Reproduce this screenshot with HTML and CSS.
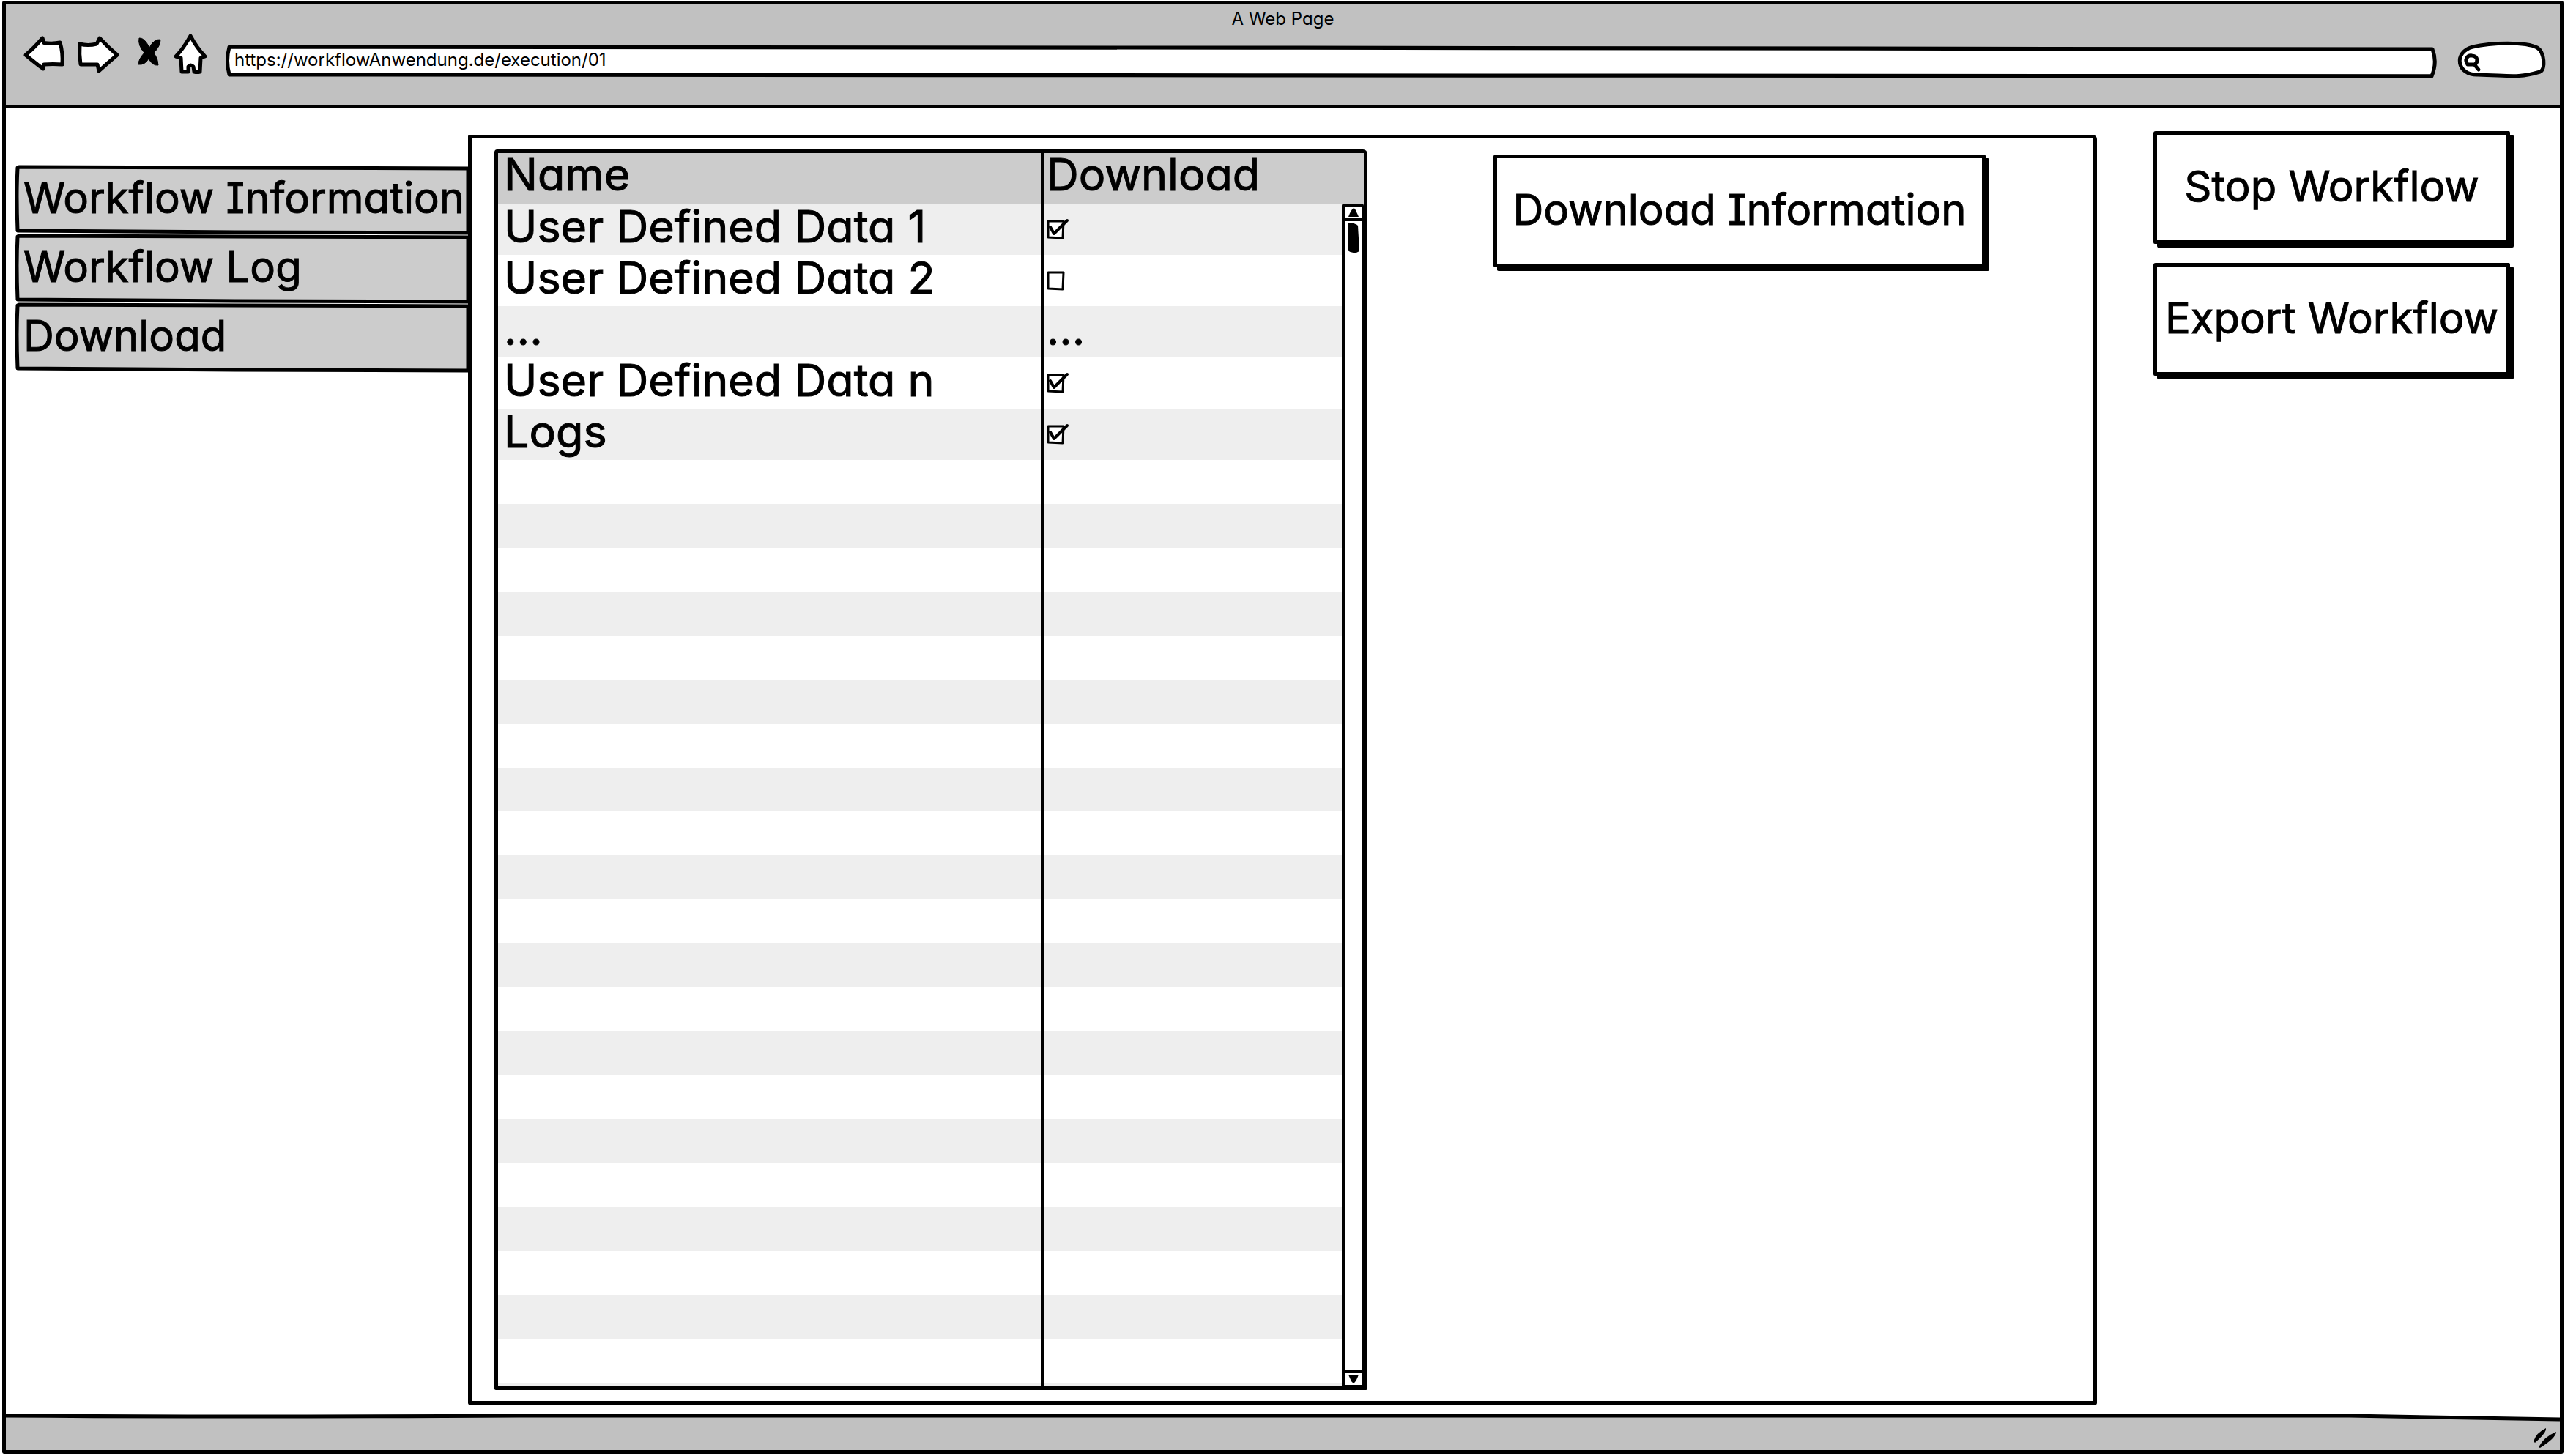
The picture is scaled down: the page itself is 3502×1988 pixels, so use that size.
FILE: index.html
```html
<!DOCTYPE html>
<html lang="en">
<head>
<meta charset="utf-8">
<title>A Web Page</title>
<link rel="stylesheet" href="styles.css">
</head>
<body>
<div class="browser">
  <header class="chrome">
    <h1 class="title">A Web Page</h1>
    <form class="toolbar">
      <button type="button" class="icon back" aria-label="Back">
        <svg viewBox="0 0 55 62"><path d="M3 31Q14 22 26 8L28 14.500Q40 16 50 14Q54 28 53 44Q40 43 28 44L27 50Q16 42 3 31Z"/></svg>
      </button>
      <button type="button" class="icon forward" aria-label="Forward">
        <svg viewBox="0 0 57 62"><path d="M4 16Q15 19 27 16L31 8Q42 20 55 31Q42 42 30 53L28 44H5Q3 30 4 16Z"/></svg>
      </button>
      <button type="button" class="icon stop" aria-label="Stop">
        <svg viewBox="0 0 32 62"><path class="solid" d="M2 8Q9 7 16 21Q22 9 31 10Q31 19 22 28Q28 36 28 45Q20 46 15 36Q10 45 1 44Q1 37 9 28Q0 18 2 8Z"/></svg>
      </button>
      <button type="button" class="icon home" aria-label="Home">
        <svg viewBox="0 0 45 62"><path d="M23 5Q32 22 43 33L37 35L36 54Q32 55 28 54L27 47Q23 43 20 47L20 54H11L10 35L3 33Q13 23 23 5Z"/></svg>
      </button>
      <div class="address">
        <svg class="outline" viewBox="0 0 3019 42" preserveAspectRatio="none"><path d="M5 2L1400 3L3013 5Q3020 22 3012 40L1400 39L5 38Q0 20 5 2Z"/></svg>
        <input type="text" aria-label="Address" value="https://workflowAnwendung.de/execution/01">
      </div>
      <div class="search">
        <svg class="outline" viewBox="0 0 119 49"><path d="M26 45C-3 46-8 14 19 7C44 1 92 0 107 8C117 14 119 38 111 41C80 50 70 46 26 45Z"/><path d="M12 31C7 24 12 18 18 19C27 20 26 28 22 31ZM22 32L27 38"/></svg>
        <input type="search" aria-label="Search">
      </div>
    </form>
  </header>

  <main class="page">
    <nav class="tabs">
      <a href="#information"><svg class="outline" viewBox="0 0 618 94" preserveAspectRatio="none"><path d="M5 2L300 3L618 4V92L300 91L3 89Q1 40 3 3Z"/></svg><span>Workflow Information</span></a>
      <a href="#log"><svg class="outline" viewBox="0 0 618 94" preserveAspectRatio="none"><path d="M5 2L300 3L618 4V92L300 91L3 89Q1 40 3 3Z"/></svg><span>Workflow Log</span></a>
      <a href="#download"><svg class="outline" viewBox="0 0 618 94" preserveAspectRatio="none"><path d="M5 2L300 3L618 4V92L300 91L3 89Q1 40 3 3Z"/></svg><span>Download</span></a>
    </nav>

    <section class="panel" id="download">
      <div class="grid">
        <table>
          <thead>
            <tr><th class="name">Name</th><th>Download</th></tr>
          </thead>
          <tbody>
            <tr><td class="name">User Defined Data 1</td><td><span class="check"><input type="checkbox" checked aria-label="Download User Defined Data 1"><svg viewBox="0 0 32 28"><path d="M2 3L23 3L22 26L2 25Z"/><path class="tick" d="M5 11L10 20L28 2"/></svg></span></td></tr>
            <tr><td class="name">User Defined Data 2</td><td><span class="check"><input type="checkbox" aria-label="Download User Defined Data 2"><svg viewBox="0 0 32 28"><path d="M2 3L23 3L22 26L2 25Z"/><path class="tick" d="M5 11L10 20L28 2"/></svg></span></td></tr>
            <tr><td class="name">...</td><td>...</td></tr>
            <tr><td class="name">User Defined Data n</td><td><span class="check"><input type="checkbox" checked aria-label="Download User Defined Data n"><svg viewBox="0 0 32 28"><path d="M2 3L23 3L22 26L2 25Z"/><path class="tick" d="M5 11L10 20L28 2"/></svg></span></td></tr>
            <tr><td class="name">Logs</td><td><span class="check"><input type="checkbox" checked aria-label="Download Logs"><svg viewBox="0 0 32 28"><path d="M2 3L23 3L22 26L2 25Z"/><path class="tick" d="M5 11L10 20L28 2"/></svg></span></td></tr>
          </tbody>
        </table>
        <div class="stripes"><div class="name"></div></div>
        <div class="scrollbar">
          <button type="button" aria-label="Scroll up"><svg viewBox="0 0 16 12"><path d="M1 12Q4 4 7 1Q9-1 11 3L15 12Z"/></svg></button>
          <div class="track"><svg viewBox="0 0 16 42"><path d="M1 1Q8-1 14 4L16 39Q8 44 0 38Z"/></svg></div>
          <button type="button" aria-label="Scroll down"><svg viewBox="0 0 16 12"><path d="M1 0H15Q12 8 10 10Q8 13 5 9Z"/></svg></button>
        </div>
      </div>
      <button type="button" class="btn">Download Information</button>
    </section>

    <aside class="actions">
      <button type="button" class="btn">Stop Workflow</button>
      <button type="button" class="btn">Export Workflow</button>
    </aside>
  </main>

  <footer class="status">
    <svg class="edge" viewBox="0 0 3487 12" preserveAspectRatio="none"><path class="fill" d="M0 3Q300 5 700 3H3200L3487 8V12H0Z"/><path class="line" d="M0 3Q300 5 700 3H3200L3487 8"/></svg>
    <svg class="grip" viewBox="0 0 32 28"><path d="M0 18Q4 6 17 0Q18 6 2 20ZM7 26Q14 12 31 5Q31 13 9 27Z"/></svg>
  </footer>
</div>
</body>
</html>
```
FILE: styles.css
```css
* { box-sizing: border-box; }

body {
  margin: 0;
  min-height: 100vh;
  display: flex;
  padding: 1px 2px 3px 3px;
  background: #fff;
  color: #000;
  font: 61px Inter, "Liberation Sans", sans-serif;
  /* single-storey a, capital I with serifs */
  font-feature-settings: "cv11", "cv08";
}

button, input { font: inherit; font-feature-settings: inherit; color: inherit; }
svg { display: block; overflow: visible; }

.browser {
  flex: 1;
  display: flex;
  flex-direction: column;
  border: 5px solid #000;
  border-radius: 3px;
}

/* window chrome */
.chrome {
  background: #c1c1c1;
  border-bottom: 5px solid #000;
  padding-bottom: 37px;
  font-size: 24px;
}
.title {
  margin: 0;
  font-size: 24px;
  font-weight: 400;
  line-height: 40px;
  height: 38px;
  text-align: center;
}
.toolbar {
  display: flex;
  align-items: flex-end;
  height: 62px;
  padding: 0 19px 0 24px;
}
.icon {
  height: 62px;
  padding: 0;
  border: 0;
  background: none;
}
.icon svg {
  width: 100%;
  height: 100%;
  fill: #fff;
  stroke: #000;
  stroke-width: 5;
  stroke-linejoin: round;
}
.icon .solid { fill: #000; stroke-width: 1; }
.back { width: 55px; }
.forward { width: 57px; margin-left: 18px; }
.stop { width: 32px; margin-left: 26px; }
.home { width: 45px; margin-left: 17px; }

.outline {
  position: absolute;
  inset: 0;
  width: 100%;
  height: 100%;
  fill: #fff;
  stroke: #000;
  stroke-width: 5;
  stroke-linejoin: round;
  stroke-linecap: round;
}
.address, .search { position: relative; }
.address { flex: 1; height: 44px; margin-left: 26px; }
.search { width: 119px; height: 49px; margin-left: 30px; }
.address input, .search input {
  position: relative;
  display: block;
  width: 100%;
  height: 100%;
  border: 0;
  padding: 0 12px;
  background: none;
  outline: 0;
}
.address input { padding-bottom: 5px; }
.search input { padding-left: 32px; }

/* page body */
.page {
  flex: 1;
  display: grid;
  grid-template-columns: 618px 1fr auto;
  padding: 0 68px 12px 13px;
}
.tabs { padding-top: 78px; font-size: 58px; }
.tabs a {
  position: relative;
  display: block;
  height: 94px;
  padding-left: 11px;
  color: inherit;
  text-decoration: none;
  line-height: 88px;
  white-space: nowrap;
}
.tabs .outline { fill: #ccc; }
.tabs span { position: relative; }
.tabs, .grid table, .btn { -webkit-text-stroke: 1px #000; }

.panel {
  position: relative;
  display: flex;
  align-items: flex-start;
  margin-top: 36px;
  padding: 15px 147px 15px 31px;
  border: 5px solid #000;
  border-radius: 2px 6px 2px 2px;
  background: #fff;
}
.panel .btn { width: 672px; margin: 7px 0 0 172px; }

.btn {
  height: 154px;
  padding: 0 0 4px;
  border: 5px solid #000;
  border-radius: 3px 2px 2px 2px;
  box-shadow: 5px 5px 0 #000;
  background: #fff;
  font-size: 58px;
  white-space: nowrap;
}

.actions {
  display: flex;
  flex-direction: column;
  gap: 26px;
  margin: 31px 0 0 77px;
}
.actions .btn { width: 487px; }

/* data grid */
.grid {
  position: relative;
  flex: 1;
  align-self: stretch;
  display: flex;
  flex-direction: column;
  border: 5px solid #000;
  border-radius: 4px 6px 2px 2px;
}
table {
  width: 100%;
  table-layout: fixed;
  border-collapse: separate;
  border-spacing: 0;
}
th, td {
  height: 70px;
  padding: 0 4px;
  line-height: 62px;
  text-align: left;
  vertical-align: top;
}
th {
  height: 69px;
  line-height: 58px;
  font-weight: 400;
  background: #ccc;
}
th.name, td.name { padding-left: 8px; }
.name { width: 63%; border-right: 4px solid #000; }
tbody tr:nth-child(odd) { background: #eee; }

.stripes {
  flex: 1;
  background: repeating-linear-gradient(#fff 0 60px, #eee 60px 120px);
}
.stripes .name { height: 100%; }

.check {
  position: relative;
  display: block;
  width: 32px;
  height: 28px;
  margin-top: 21px;
}
.check input {
  appearance: none;
  position: absolute;
  inset: 0;
  margin: 0;
}
.check svg {
  position: relative;
  pointer-events: none;
  fill: #fff;
  stroke: #000;
  stroke-width: 3;
  stroke-linejoin: round;
  stroke-linecap: round;
}
.check .tick { fill: none; stroke-width: 4; display: none; }
.check input:checked + svg .tick { display: inline; }

.scrollbar {
  position: absolute;
  top: 69px;
  right: 0;
  bottom: 0;
  width: 30px;
  display: flex;
  flex-direction: column;
  background: #fff;
  border: solid #000;
  border-width: 4px 2px 2px 4px;
  border-radius: 3px 3px 0 0;
}
.scrollbar button {
  display: flex;
  justify-content: center;
  align-items: center;
  height: 16px;
  padding: 0;
  border: 0;
  background: none;
}
.scrollbar svg { width: 16px; flex: none; }
.track {
  flex: 1;
  display: flex;
  justify-content: center;
  align-items: flex-start;
  padding-top: 2px;
  border: solid #000;
  border-width: 4px 0;
}

/* status bar */
.status {
  display: flex;
  flex-direction: column;
  align-items: flex-end;
  height: 50px;
  background: #c1c1c1;
}
.edge { width: 100%; height: 12px; background: #fff; }
.edge .fill { fill: #c1c1c1; }
.edge .line { fill: none; stroke: #000; stroke-width: 5; }
.grip { width: 32px; margin: 8px 4px 0 0; }
```
